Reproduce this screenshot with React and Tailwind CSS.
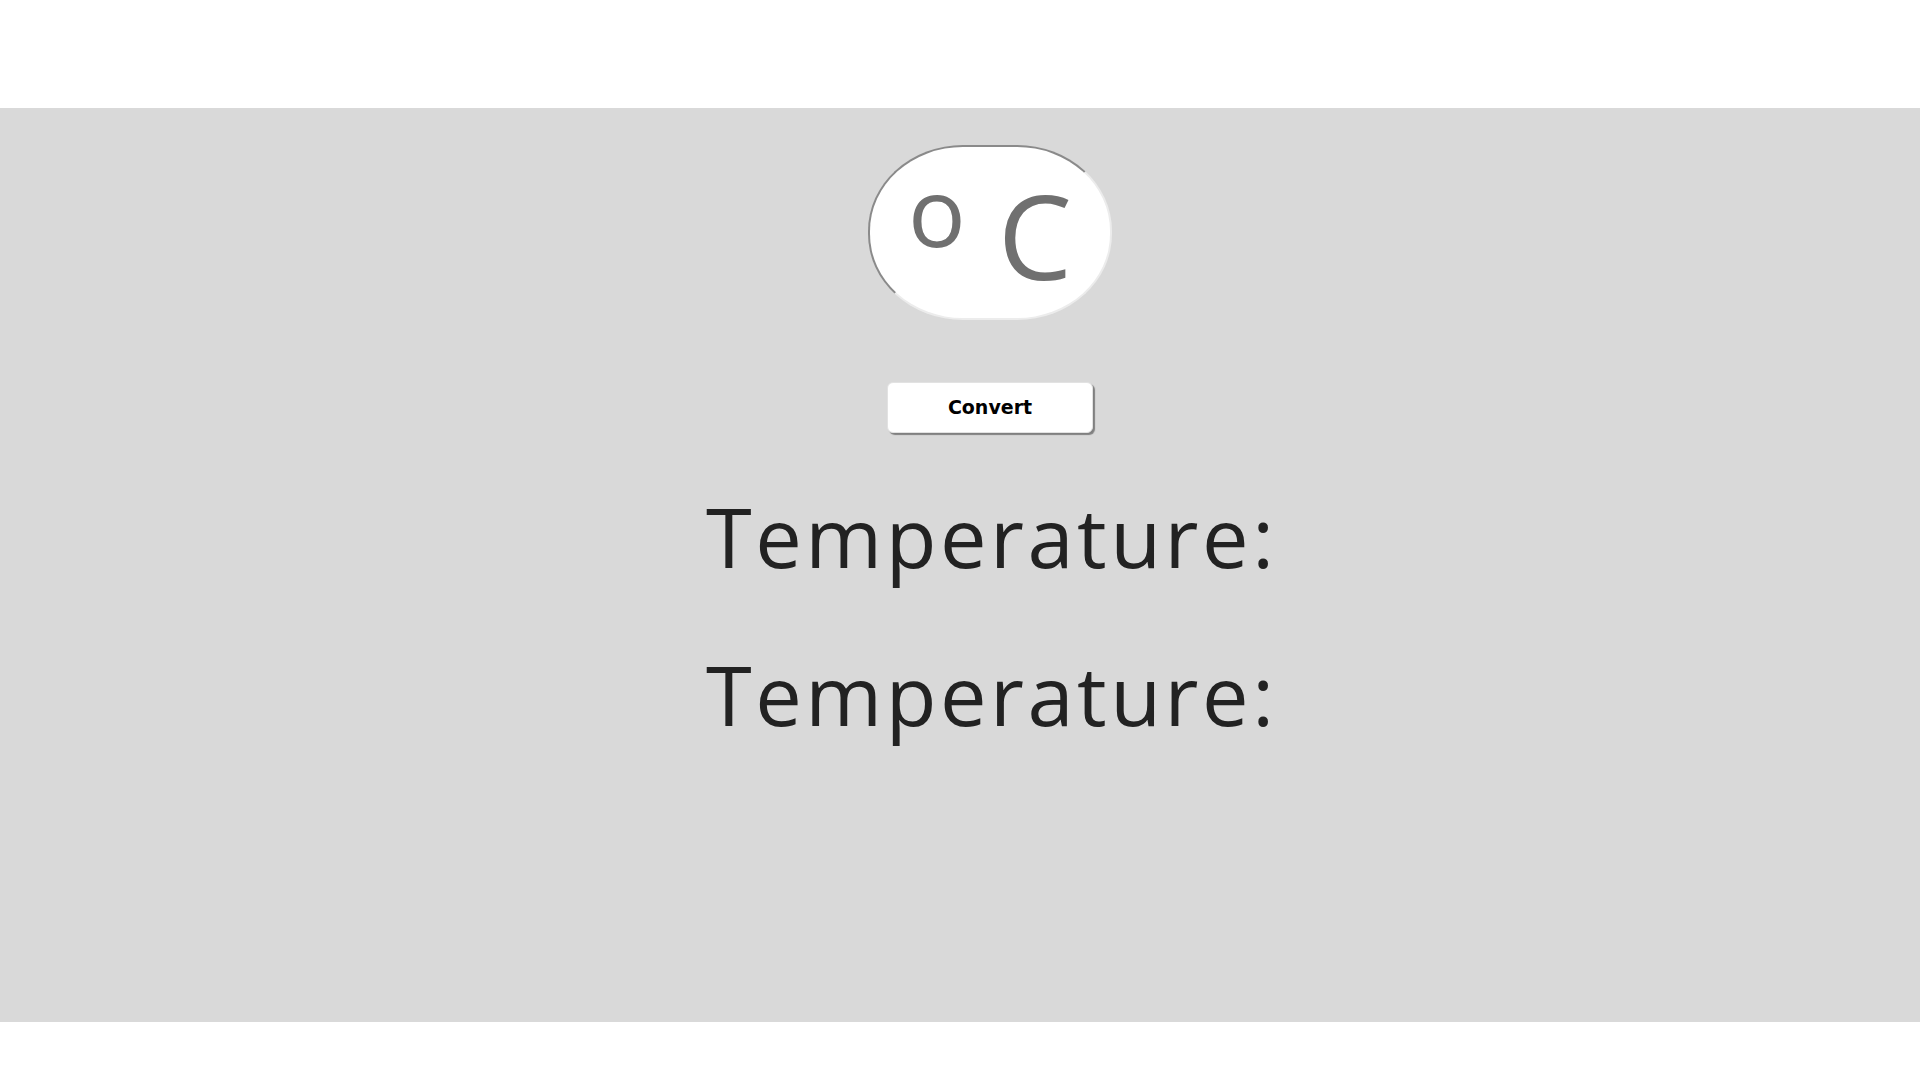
export default function App() {
  return (
    <div className="min-h-screen bg-white">
      <div className="h-[108px]" />

      {/* Converter panel */}
      <div className="h-[914px] bg-[#d9d9d9] pl-[60px] flex flex-col items-center pt-[37px]">
        {/* Unit oval */}
        <div className="w-[244px] h-[175px] rounded-[95px/86px] bg-white border-2 border-t-[#8a8a8a] border-l-[#8a8a8a] border-r-[#ececec] border-b-[#ececec] flex justify-center items-start font-['Open_Sans',sans-serif] font-medium text-[#707070]">
          <span className="mt-[15px] text-[96px] leading-none">o</span>
          <span className="ml-[32px] mt-[29px] text-[118px] leading-none">C</span>
        </div>

        <button className="mt-[62px] w-[206px] h-[51px] bg-white rounded-[6px] border border-[#e2e2e2] shadow-[2px_2px_1px_#808080] font-['DejaVu_Sans',sans-serif] font-bold text-[19px] text-black">
          Convert
        </button>

        <div className="mt-[24px] flex flex-col items-center font-['Open_Sans',sans-serif] text-[83px] leading-[158px] tracking-[3.5px] text-[#222222] pl-[3.5px]">
          <div>Temperature:</div>
          <div>Temperature:</div>
        </div>
      </div>
    </div>
  );
}
